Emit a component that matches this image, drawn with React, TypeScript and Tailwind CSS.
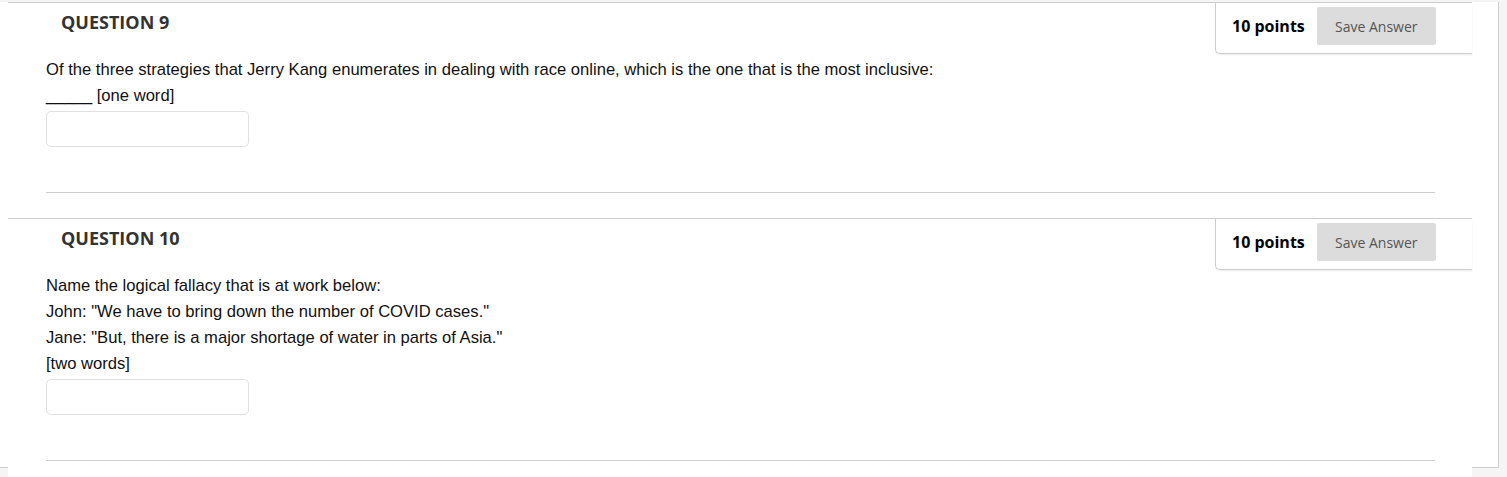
import React from "react";

const sans = { fontFamily: '"Open Sans", "Liberation Sans", sans-serif' };

function Question({
  num,
  lines,
  first,
}: {
  num: number;
  lines: string[];
  first?: boolean;
}) {
  return (
    <div className={`border-t border-[#cdcdcd] ${first ? "mt-[2px]" : "mt-[25px]"}`}>
      <div className="flex justify-between items-start">
        <h3
          className="pl-[53px] pt-[7px] text-[18px] leading-[24px] font-bold text-[#333]"
          style={sans}
        >
          QUESTION {num}
        </h3>
        <div className="w-[257px] h-[51px] border-l border-b border-[#cdcdcd] rounded-bl-[5px] shadow-[0_1px_2px_rgba(0,0,0,0.08)] flex items-start pl-[16px] pt-[4px]">
          <span
            className="mt-[8px] text-[16px] leading-[22px] font-bold text-black"
            style={sans}
          >
            10 points
          </span>
          <button
            className="ml-[12px] w-[119px] h-[38px] bg-[#dcdcdc] rounded-[2px] text-[14px] text-[#555]"
            style={sans}
          >
            Save Answer
          </button>
        </div>
      </div>
      <div className="pl-[38px] pt-[3px]">
        <div
          className="text-[16.6px] leading-[26px] text-[#111]"
          style={{ fontFamily: '"Liberation Sans", Arial, sans-serif' }}
        >
          {lines.map((l, i) => (
            <p key={i}>{l}</p>
          ))}
        </div>
        <div className="mt-[2px] w-[203px] h-[36px] border border-[#e0e0e0] rounded-[5px] bg-white" />
        <div className="mt-[45px] mr-[37px] border-t border-[#cdcdcd]" />
      </div>
    </div>
  );
}

export default function App() {
  return (
    <div className="w-[1507px] h-[477px] bg-[#f5f5f5] overflow-hidden">
      <div className="w-[1499px] h-[466px] bg-white border-r border-b border-[#cdcdcd]">
        <div className="ml-[8px] w-[1464px] bg-white pb-[40px]">
          <Question
            num={9}
            first
            lines={[
              "Of the three strategies that Jerry Kang enumerates in dealing with race online, which is the one that is the most inclusive:",
              "_____ [one word]",
            ]}
          />
          <Question
            num={10}
            lines={[
              "Name the logical fallacy that is at work below:",
              'John: "We have to bring down the number of COVID cases."',
              'Jane: "But, there is a major shortage of water in parts of Asia."',
              "[two words]",
            ]}
          />
        </div>
      </div>
    </div>
  );
}
